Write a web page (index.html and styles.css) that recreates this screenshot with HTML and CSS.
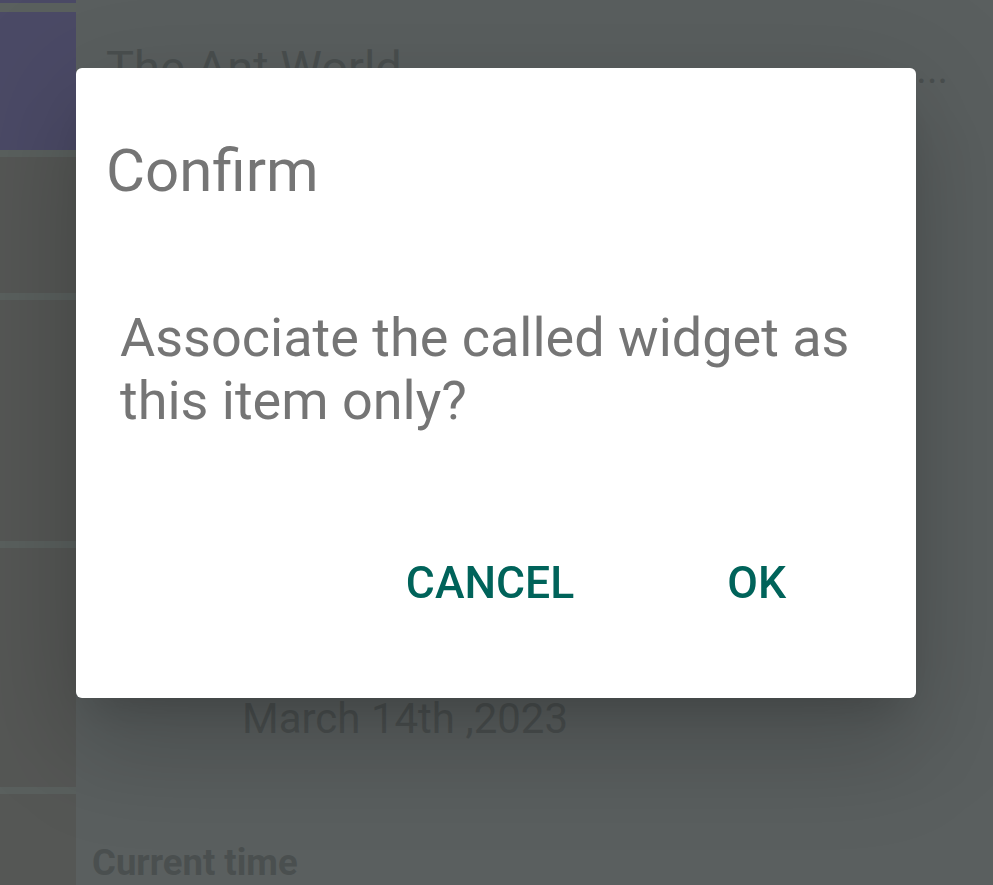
FILE: index.html
```html
<!DOCTYPE html>
<html lang="en">
<head>
  <meta charset="UTF-8" />
  <meta name="viewport" content="width=device-width, initial-scale=1" />
  <title>Confirm</title>
  <link rel="stylesheet" href="styles.css">
</head>
<body>
  <div class="app">
    <aside class="sidebar">
      <div class="side-item side-item--selected side-item--peek"></div>
      <div class="side-item side-item--selected side-item--tall1"></div>
      <div class="side-item side-item--tall2"></div>
      <div class="side-item side-item--tall3"></div>
      <div class="side-item side-item--tall4"></div>
      <div class="side-item side-item--rest"></div>
    </aside>

    <main class="content">
      <div class="item-head">
        <span class="item-title">The Ant World</span>
        <span class="item-more">...</span>
      </div>
      <div class="item-date">March 14th ,2023</div>
      <h2 class="section-title">Current time</h2>
    </main>
  </div>

  <div class="scrim" role="presentation">
    <div class="dialog" role="alertdialog" aria-labelledby="dlgTitle">
      <h1 class="dialog-title" id="dlgTitle">Confirm</h1>
      <p class="dialog-message">Associate the called widget as this item only?</p>
      <div class="dialog-actions">
        <button type="button" class="dialog-btn">Cancel</button>
        <button type="button" class="dialog-btn">OK</button>
      </div>
    </div>
  </div>
</body>
</html>
```

FILE: styles.css
```css
:root {
  --bg-dim: #5a5f5f;
  --side-dim: #555755;
  --side-line: #5a605e;
  --purple-dim: #4b4a66;
  --text-dim: #4a4f4f;
  --dialog-text: #757575;
  --teal: #00635a;
  --white: #ffffff;
  --font-family: 'Roboto', 'Noto Sans', sans-serif;
}

* {
  box-sizing: border-box;
}

html,
body {
  margin: 0;
  height: 100%;
}

body {
  font-family: var(--font-family);
  background-color: var(--bg-dim);
  overflow: hidden;
}

.app {
  display: flex;
  height: 100vh;
}

.sidebar {
  width: 76px;
  flex-shrink: 0;
  display: flex;
  flex-direction: column;
  gap: 7px;
  background-color: var(--side-line);
}

.side-item {
  background-color: var(--side-dim);
}

.side-item--selected {
  background-color: var(--purple-dim);
}

.side-item--peek {
  height: 3px;
  margin-bottom: 2px;
}

.side-item--tall1 {
  height: 138px;
}

.side-item--tall2 {
  height: 136px;
}

.side-item--tall3 {
  height: 241px;
}

.side-item--tall4 {
  height: 239px;
}

.side-item--rest {
  flex: 1;
}

.content {
  flex: 1;
  display: flex;
  flex-direction: column;
  color: var(--text-dim);
}

.item-head {
  display: flex;
  justify-content: space-between;
  align-items: flex-start;
  padding: 40px 45px 0 30px;
  font-size: 47px;
  line-height: 56px;
}

.item-more {
  font-size: 40px;
  line-height: 40px;
  margin-top: 10px;
}

.item-date {
  margin-top: 598px;
  padding-left: 166px;
  font-size: 42px;
  line-height: 50px;
}

.section-title {
  margin: 101px 0 0;
  padding-left: 16px;
  font-size: 36.5px;
  line-height: 36px;
  font-weight: 700;
}

/* modal layer */
.scrim {
  position: fixed;
  inset: 0;
  display: flex;
  align-items: flex-start;
  padding: 68px 0 0 76px;
}

.dialog {
  width: 840px;
  height: 630px;
  background-color: var(--white);
  border-radius: 6px;
  box-shadow: 0 24px 40px -18px rgba(0, 0, 0, 0.16),
              0 60px 100px 6px rgba(0, 0, 0, 0.1),
              0 20px 120px 20px rgba(0, 0, 0, 0.1);
  padding: 67px 0 0 30px;
  color: var(--dialog-text);
}

.dialog-title {
  margin: 0;
  font-size: 60px;
  line-height: 72px;
  font-weight: 400;
}

.dialog-message {
  margin: 99px 50px 0 14px;
  font-size: 54px;
  line-height: 63px;
}

.dialog-actions {
  display: flex;
  justify-content: flex-end;
  gap: 153px;
  margin-top: 125px;
  padding-right: 130px;
}

.dialog-btn {
  font-family: var(--font-family);
  background: none;
  border: none;
  padding: 0;
  color: var(--teal);
  font-size: 44.5px;
  line-height: 53px;
  font-weight: 500;
  text-transform: uppercase;
  cursor: pointer;
}
```
